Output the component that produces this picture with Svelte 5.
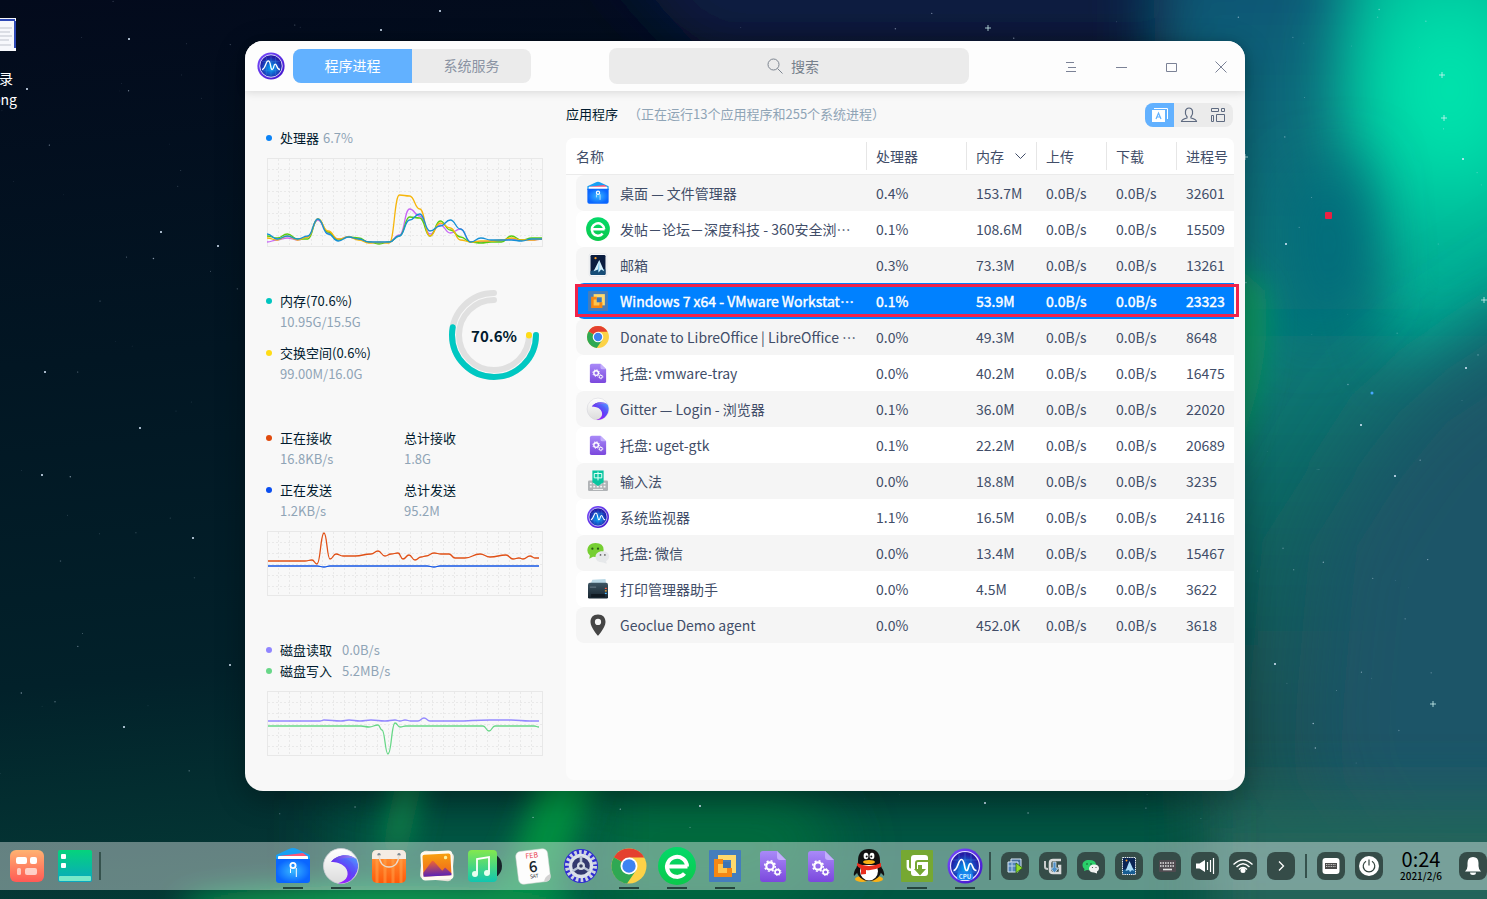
<script lang="ts">
	type Point = [number, number];

	interface Series {
		color: string;
		points: Point[];
	}

	interface Process {
		icon: string;
		name: string;
		cut?: boolean;
		cpu: string;
		memory: string;
		pid: number;
	}

	const processes: Process[] = [
		{ icon: 'files', name: '桌面 — 文件管理器', cpu: '0.4%', memory: '153.7M', pid: 32601 },
		{ icon: 'e360', name: '发帖－论坛－深度科技 - 360安全浏', cut: true, cpu: '0.1%', memory: '108.6M', pid: 15509 },
		{ icon: 'mail', name: '邮箱', cpu: '0.3%', memory: '73.3M', pid: 13261 },
		{ icon: 'vmware', name: 'Windows 7 x64 - VMware Workstat', cut: true, cpu: '0.1%', memory: '53.9M', pid: 23323 },
		{ icon: 'chrome', name: 'Donate to LibreOffice | LibreOffice ', cut: true, cpu: '0.0%', memory: '49.3M', pid: 8648 },
		{ icon: 'gears', name: '托盘: vmware-tray', cpu: '0.0%', memory: '40.2M', pid: 16475 },
		{ icon: 'browser', name: 'Gitter — Login - 浏览器', cpu: '0.1%', memory: '36.0M', pid: 22020 },
		{ icon: 'gears', name: '托盘: uget-gtk', cpu: '0.1%', memory: '22.2M', pid: 20689 },
		{ icon: 'input', name: '输入法', cpu: '0.0%', memory: '18.8M', pid: 3235 },
		{ icon: 'monitor', name: '系统监视器', cpu: '1.1%', memory: '16.5M', pid: 24116 },
		{ icon: 'wechat', name: '托盘: 微信', cpu: '0.0%', memory: '13.4M', pid: 15467 },
		{ icon: 'printer', name: '打印管理器助手', cpu: '0.0%', memory: '4.5M', pid: 3622 },
		{ icon: 'pin', name: 'Geoclue Demo agent', cpu: '0.0%', memory: '452.0K', pid: 3618 }
	];

	let selected = $state(23323);
	let query = $state('');

	const dockApps = [
		{ icon: 'files', label: '文件管理器', open: true },
		{ icon: 'browser', label: '浏览器', open: true },
		{ icon: 'store', label: '应用商店', open: false },
		{ icon: 'album', label: '相册', open: false },
		{ icon: 'music', label: '音乐', open: false },
		{ icon: 'calendar', label: '日历', open: false },
		{ icon: 'settings', label: '控制中心', open: false },
		{ icon: 'chrome', label: 'Chrome', open: true },
		{ icon: 'e360', label: '360安全浏览器', open: true },
		{ icon: 'vmware', label: 'VMware', open: true },
		{ icon: 'gears', label: 'vmware-tray', open: false },
		{ icon: 'gears', label: 'uget-gtk', open: false },
		{ icon: 'qq', label: 'QQ', open: false },
		{ icon: 'uget', label: 'uGet', open: true },
		{ icon: 'cpu', label: '系统监视器', open: true }
	];

	const tray = ['t-vm', 't-uget', 't-wechat', 't-mail', 't-keys', 't-volume', 't-wifi', 't-more'];

	const evenly = (ys: number[]): Point[] => ys.map((y, i) => [(i * 275) / (ys.length - 1), y]);

	const cpuSeries: Series[] = [
		{ color: '#c869f5', points: evenly([84, 82, 80, 82, 79, 62, 75, 81, 79, 81, 84, 85, 84, 77, 51, 58, 76, 67, 75, 71, 84, 84, 83, 83, 81, 82, 82, 81]) },
		{ color: '#58cc12', points: evenly([78, 80, 76, 81, 81, 61, 74, 82, 79, 80, 84, 86, 84, 78, 59, 60, 78, 63, 72, 79, 84, 85, 84, 84, 78, 82, 80, 80]) },
		{ color: '#f6b60c', points: evenly([80, 82, 78, 82, 79, 61, 73, 81, 79, 82, 85, 84, 85, 37, 38, 51, 78, 65, 70, 82, 84, 83, 83, 82, 80, 82, 82, 81]) },
		{ color: '#1590d6', points: evenly([76, 81, 78, 81, 78, 61, 76, 83, 79, 81, 84, 84, 84, 78, 62, 56, 73, 68, 62, 71, 84, 80, 82, 82, 82, 83, 81, 81]) }
	];

	const netSeries: Series[] = [
		{
			color: '#e05016',
			points: [
				[1, 30], [38, 30], [45, 29], [50, 33], [57, 2], [63, 28], [69, 23], [76, 25], [88, 25], [104, 23], [111, 20],
				[118, 25], [124, 23], [131, 22], [136, 28], [142, 24], [148, 29], [154, 26], [159, 25], [167, 22], [174, 23],
				[182, 23], [188, 27], [198, 27], [213, 23], [223, 26], [239, 24], [246, 28], [252, 27], [256, 28], [263, 25],
				[268, 27], [272, 27]
			]
		},
		{ color: '#1456e4', points: [[1, 35], [50, 35], [57, 36], [63, 35], [160, 35], [167, 36], [173, 35], [272, 35]] }
	];

	const diskSeries: Series[] = [
		{
			color: '#9388ff',
			points: [
				[1, 30], [53, 30], [57, 29], [74, 30], [82, 29], [93, 30], [104, 29], [118, 30], [128, 29], [133, 30], [138, 29],
				[144, 30], [151, 30], [157, 27], [163, 30], [188, 30], [223, 29], [244, 29], [263, 30], [272, 30]
			]
		},
		{
			color: '#68d788',
			points: [
				[1, 35], [51, 35], [57, 35], [94, 35], [102, 36], [111, 34], [115, 39], [121, 63], [128, 32], [133, 36],
				[139, 35], [211, 35], [216, 35], [222, 40], [228, 35], [233, 35], [267, 35], [272, 36]
			]
		}
	];

	function curve(points: Point[]) {
		let d = `M${points[0]}`;
		for (let i = 1; i < points.length; i++) {
			const [x0, y0] = points[i - 1];
			const [x1, y1] = points[i];
			const mid = (x0 + x1) / 2;
			d += `C${mid} ${y0} ${mid} ${y1} ${x1} ${y1}`;
		}
		return d;
	}

	const steps = (size: number) => Array.from({ length: Math.ceil(size / 11) - 1 }, (_, i) => (i + 1) * 11);

	// faint stars come from a small fixed-seed generator so the sky never changes
	let seed = 7;
	const random = () => (seed = (seed * 16807) % 2147483647) / 2147483647;
	const dust = Array.from({ length: 240 }, () => ({
		x: random() * 1487,
		y: random() * 840,
		r: 0.3 + random() * 0.5,
		o: 0.15 + random() * 0.5
	}));
	const stars: Point[] = [
		[381, 30], [440, 11], [129, 39], [161, 232], [218, 246], [45, 372], [42, 475], [140, 428], [124, 727], [700, 806],
		[1286, 244], [1361, 425], [1395, 476], [1275, 664], [230, 665], [193, 538], [27, 89], [1463, 159], [985, 803], [1466, 368]
	];
	const sparkles: Point[] = [[988, 28], [1442, 75], [1433, 704], [1245, 157], [1484, 300], [1444, 118]];
</script>

{#snippet icon(name: string)}
	<svg class="icon" viewBox="0 0 48 48" aria-hidden="true"><use href="#{name}" /></svg>
{/snippet}

{#snippet chart(height: number, series: Series[])}
	<svg class="chart" viewBox="0 0 276 {height}" preserveAspectRatio="none" aria-hidden="true">
		<g class="grid">
			{#each steps(276) as x}
				<line x1={x + 0.5} x2={x + 0.5} y1="1" y2={height} />
			{/each}
			{#each steps(height) as y}
				<line x1="1" x2="276" y1={y + 0.5} y2={y + 0.5} />
			{/each}
		</g>
		<rect class="frame" x="0.5" y="0.5" width="275" height={height - 1} />
		{#each series as line}
			<path d={curve(line.points)} fill="none" stroke={line.color} stroke-width="1.3" />
		{/each}
	</svg>
{/snippet}

{#snippet stat(color: string, label: string, value: string)}
	<div class="stat">
		<i class="dot" style="background: {color}"></i>
		<div class="label">{label}</div>
		<div class="value">{value}</div>
	</div>
{/snippet}

<svg class="defs" aria-hidden="true">
	<defs>
		<linearGradient id="g-orange" x2="0" y2="1"><stop stop-color="#ffb271" /><stop offset="1" stop-color="#ff5a55" /></linearGradient>
		<linearGradient id="g-teal" x2="0" y2="1"><stop stop-color="#05d37c" /><stop offset="1" stop-color="#0aa7c0" /></linearGradient>
		<linearGradient id="g-violet" x2="0" y2="1"><stop stop-color="#a98af8" /><stop offset="1" stop-color="#7b48dd" /></linearGradient>
		<linearGradient id="g-bag" x2="0" y2="1"><stop stop-color="#ff9a3c" /><stop offset="1" stop-color="#ff5a0a" /></linearGradient>
		<linearGradient id="g-photo" x2="0" y2="1"><stop stop-color="#f7a010" /><stop offset="1" stop-color="#f0641c" /></linearGradient>
		<linearGradient id="g-hill" x2="0" y2="1"><stop stop-color="#f0642f" /><stop offset="1" stop-color="#5b23b4" /></linearGradient>
		<linearGradient id="g-music" x2="0" y2="1"><stop stop-color="#83e84e" /><stop offset="1" stop-color="#10c6b0" /></linearGradient>
		<linearGradient id="g-wave" x1="0.2" y1="1" x2="0.9" y2="0"><stop stop-color="#a81cff" /><stop offset="0.5" stop-color="#6a35f8" /><stop offset="1" stop-color="#48a4ff" /></linearGradient>
		<linearGradient id="g-crest" x2="1" y2="0"><stop stop-color="#5a35e0" /><stop offset="1" stop-color="#a58cf6" /></linearGradient>
		<linearGradient id="g-e" x2="0" y2="1"><stop stop-color="#04d96a" /><stop offset="1" stop-color="#0bc94b" /></linearGradient>
		<linearGradient id="g-pearl" x2="0" y2="1"><stop stop-color="#fff" /><stop offset="1" stop-color="#dcdcdc" /></linearGradient>
		<linearGradient id="g-ring" x2="1" y2="1"><stop stop-color="#7a4cff" /><stop offset="1" stop-color="#3d11c8" /></linearGradient>
		<linearGradient id="g-print" x2="0" y2="1"><stop stop-color="#3d5563" /><stop offset="1" stop-color="#17242e" /></linearGradient>
		<radialGradient id="g-folder"><stop stop-color="#38b8ff" /><stop offset="1" stop-color="#0a66ff" /></radialGradient>
		<radialGradient id="g-scope" cy="0.6"><stop stop-color="#00a6f5" /><stop offset="1" stop-color="#241aa4" /></radialGradient>

		<symbol id="launcher" viewBox="0 0 48 48">
			<rect x="7" y="8" width="34" height="32" rx="6" fill="url(#g-orange)" />
			<g fill="#fff">
				<rect x="13" y="15" width="11" height="7" rx="2" /><rect x="27" y="15" width="7" height="7" rx="2" />
				<rect x="14" y="26" width="4" height="7" rx="1.5" opacity="0.6" /><rect x="22" y="26" width="12" height="7" rx="2" opacity="0.65" />
			</g>
		</symbol>
		<symbol id="panel" viewBox="0 0 48 48">
			<rect x="7" y="8" width="34" height="32" rx="2" fill="url(#g-teal)" />
			<rect x="8" y="34" width="32" height="5" rx="1" fill="#78e8c9" />
			<rect x="10" y="12" width="5" height="5" rx="1" fill="#fff" /><rect x="10" y="21" width="5" height="5" rx="1" fill="#fff" />
		</symbol>
		<symbol id="files" viewBox="0 0 48 48">
			<path d="M7 13 20 7q4-2 8 0l13 6v6H7z" fill="#18a0f5" />
			<path d="M10 14 34 11l4 3v5H10z" fill="#ff5577" />
			<path d="M9 15q0-1 1-1h28q1 0 1 1v4H9z" fill="#fff" />
			<path d="M7 17h34v21q0 3-3 3H10q-3 0-3-3z" fill="url(#g-folder)" />
			<circle cx="24" cy="23.5" r="2.6" fill="none" stroke="#fff" stroke-width="1.8" />
			<path d="M21.5 26.500v4.500M27.300 26v9" stroke="#fff" stroke-width="1" />
		</symbol>
		<symbol id="browser" viewBox="0 0 48 48">
			<circle cx="24" cy="24" r="17.5" fill="url(#g-pearl)" stroke="#d0d0d8" stroke-width="0.8" />
			<path d="M14 20C20 12 32 11 39.500 17A17.500 17.500 0 0 1 21 41.200C31 39 33 31 28 25 24 21 19 20 14 20z" fill="url(#g-wave)" />
			<path d="M18 20C29 19 36 26 33 38.500 42 32 38 19 28 17z" fill="#4a5cf8" opacity="0.4" />
			<path d="M14 20C20 12 32 11 39.500 17 32 14.500 22 16 14 20z" fill="url(#g-crest)" />
		</symbol>
		<symbol id="store" viewBox="0 0 48 48">
			<rect x="7" y="8" width="34" height="33" rx="5" fill="url(#g-bag)" />
			<path d="M12 17v24M20 17v24M28 17v24M36 17v24" stroke="#ffb45c" stroke-width="3" opacity="0.4" />
			<path d="M7 17v-4q0-5 5-5h24q5 0 5 5v4z" fill="#f5ece4" />
			<circle cx="14" cy="12.5" r="1.6" fill="#7b8790" /><circle cx="34" cy="12.5" r="1.6" fill="#7b8790" />
			<path d="M14 13q1 12 10 12t10-12" fill="none" stroke="#e9dccd" stroke-width="1.4" />
		</symbol>
		<symbol id="album" viewBox="0 0 48 48">
			<rect x="8" y="10" width="32" height="28" rx="4" fill="#e4dfd6" transform="rotate(6 24 24)" />
			<rect x="8" y="9" width="32" height="29" rx="4" fill="#fffaf0" transform="rotate(-3 24 24)" />
			<g transform="rotate(-3 24 24)">
				<rect x="10" y="12" width="28" height="22" rx="2" fill="url(#g-photo)" />
				<path d="M10 30 19 19q1-1 2 0l8 10 3-3 6 6v2H10z" fill="url(#g-hill)" />
				<circle cx="33" cy="16" r="1.7" fill="#fff09a" />
			</g>
		</symbol>
		<symbol id="music" viewBox="0 0 48 48">
			<circle cx="28" cy="24" r="13" fill="#172328" />
			<rect x="7" y="8" width="29" height="32" rx="4" fill="url(#g-music)" />
			<path d="M16 32V17l12-2v15" fill="none" stroke="#fff" stroke-width="1.8" />
			<circle cx="14" cy="32" r="3" fill="#e7fff0" /><circle cx="26" cy="31" r="3" fill="#e7fff0" />
		</symbol>
		<symbol id="calendar" viewBox="0 0 48 48">
			<g transform="rotate(-7 24 24)">
				<rect x="8" y="8" width="32" height="33" rx="5" fill="#fdfdfd" stroke="#d4d7d5" stroke-width="0.5" />
				<path d="M40 34v2q0 5-5 5h-2q1-5 7-7z" fill="#d2d2d2" />
				<text class="glyph" x="24" y="16" font-size="7" fill="#ea4452">FEB</text>
				<text class="glyph medium" x="24" y="30" font-size="15" fill="#17232c">6</text>
				<text class="glyph" x="24" y="36" font-size="5" fill="#17232c">SAT</text>
			</g>
		</symbol>
		<symbol id="settings" viewBox="0 0 48 48">
			<circle cx="24" cy="24" r="17" fill="#302dd2" />
			<circle cx="24" cy="24" r="14" fill="none" stroke="#cdd3df" stroke-width="4" stroke-dasharray="2.7 2.187" />
			<circle cx="24" cy="24" r="10.5" fill="#33386e" stroke="#dce1ea" stroke-width="3.4" />
			<path d="M24 24V14M24 24l-8.500 5M24 24l8.500 5" stroke="#b8c2d4" stroke-width="2.6" />
			<circle cx="24" cy="24" r="4" fill="#d4dae5" /><circle cx="24" cy="24" r="1.8" fill="#343b62" />
		</symbol>
		<symbol id="chrome" viewBox="0 0 48 48">
			<circle cx="24" cy="24" r="17.5" fill="#fcd247" />
			<path d="M24 24 8.800 15.200A17.500 17.500 0 0 1 39.200 15.500H24z" fill="#e4402f" />
			<path d="M24 24 8.800 15.200A17.500 17.500 0 0 0 22 41.400l9-13z" fill="#2fa853" />
			<circle cx="24" cy="24" r="8.5" fill="#fff" /><circle cx="24" cy="24" r="6.7" fill="#3d83f2" />
		</symbol>
		<symbol id="e360" viewBox="0 0 48 48">
			<circle cx="24" cy="24" r="19" fill="url(#g-e)" />
			<path d="M14 24.500H34.500M34 24.500a10 10 0 1 0-2.500 7" fill="none" stroke="#fff" stroke-width="4" />
		</symbol>
		<symbol id="vmware" viewBox="0 0 48 48">
			<rect x="8" y="8" width="32" height="32" rx="1" fill="#447dbc" />
			<g fill="none" stroke-width="5">
				<rect x="19.5" y="15.5" width="13" height="13" stroke="#ffd96c" />
				<path d="M22 19.500h-6.500v13h13V26" stroke="#f58712" />
				<path d="M19.500 22v6.500H26" stroke="#ffc44c" />
			</g>
			<rect x="22" y="20" width="7" height="6" fill="#3c74b4" />
		</symbol>
		<symbol id="gears" viewBox="0 0 48 48">
			<path d="M14 9h14l9 9v19q0 3-3 3H14q-3 0-3-3V12q0-3 3-3z" fill="url(#g-violet)" />
			<path d="M28 9v6q0 3 3 3h6z" fill="#c3aefc" />
			<g fill="none" stroke="#fff">
				<circle cx="21" cy="24" r="3.7" stroke-width="2.2" /><circle cx="21" cy="24" r="5.3" stroke-width="1.5" stroke-dasharray="2 2.16" />
				<circle cx="28.5" cy="30" r="2.4" stroke-width="1.6" /><circle cx="28.5" cy="30" r="3.5" stroke-width="1" stroke-dasharray="1.3 1.45" />
			</g>
		</symbol>
		<symbol id="qq" viewBox="0 0 48 48">
			<ellipse cx="17" cy="37" rx="7" ry="3" fill="#fbb116" /><ellipse cx="31" cy="37" rx="7" ry="3" fill="#fbb116" />
			<path d="M13 24q-5 5-4 10l4-4M35 24q5 5 4 10l-4-4" fill="#111" />
			<ellipse cx="24" cy="27" rx="12.5" ry="12" fill="#111" />
			<ellipse cx="24" cy="29" rx="9" ry="9.5" fill="#fff" />
			<path d="M13 19q0-12 11-12t11 12v4H13z" fill="#111" />
			<ellipse cx="21" cy="14" rx="2.4" ry="3.3" fill="#fff" /><ellipse cx="27" cy="14" rx="2.4" ry="3.3" fill="#fff" />
			<circle cx="21.7" cy="14.5" r="1" fill="#111" /><circle cx="26.3" cy="14.5" r="1" fill="#111" />
			<ellipse cx="24" cy="20" rx="6" ry="2" fill="#fbb116" />
			<path d="M12 21q12 6 24 0v4q-8 4-15 3v4l-5 .500v-6q-3-1-4-3z" fill="#e92e1e" />
		</symbol>
		<symbol id="uget" viewBox="0 0 48 48">
			<rect x="8" y="8" width="32" height="32" rx="1" fill="#76a832" />
			<path d="M14.800 18v7q0 3 4 3" fill="none" stroke="#fff" stroke-width="2.4" />
			<rect x="18" y="13" width="17" height="21" rx="3" fill="#fff" />
			<path d="M35.500 19H25q-2 0-2 2v6" fill="none" stroke="#76a832" stroke-width="2" />
			<path d="M25 23h4v4h4l-6 6.500-6-6.500h4z" fill="#76a832" />
		</symbol>
		<symbol id="monitor" viewBox="0 0 48 48">
			<circle cx="24" cy="24" r="17.5" fill="url(#g-ring)" />
			<circle cx="24" cy="24" r="14.5" fill="url(#g-scope)" stroke="#e4e0ff" stroke-width="1.2" />
			<path d="M12 18h24M12 30h24M18 12v24M24 10v28M30 12v24" stroke="#4da4ef" stroke-width="0.6" opacity="0.6" />
			<path d="M12.500 28.500C17 28.500 17 17.500 20.500 17.500S23 28.500 25.500 28.500 27 21.500 29.500 21.500 31 28.500 35.500 28.500" fill="none" stroke="#fff" stroke-width="1.7" />
		</symbol>
		<symbol id="cpu" viewBox="0 0 48 48">
			<use href="#monitor" />
			<rect x="16" y="30.5" width="16" height="7.5" rx="3" fill="#1784ef" />
			<text class="glyph bold" x="24" y="36.5" font-size="6" fill="#d8f4ff">CPU</text>
		</symbol>
		<symbol id="mail" viewBox="0 0 48 48">
			<rect x="10" y="6" width="28" height="36" rx="3" fill="#fff" stroke="#d7dbe0" />
			<rect x="12" y="8" width="24" height="32" rx="2" fill="#0a1c3f" />
			<path d="M12 34q12-7 24-3v7q0 2-2 2H14q-2 0-2-2z" fill="#164d77" />
			<path d="M26 16 17 34l7-3 1 5 4-5 5 3z" fill="#d3effc" /><path d="M26 16 24 31l1 5 1-6z" fill="#6ebfe8" />
			<circle cx="20" cy="13" r="1.8" fill="#ffa025" />
		</symbol>
		<symbol id="input" viewBox="0 0 48 48">
			<rect x="8" y="23" width="32" height="17" rx="2" fill="#b0b3b6" />
			<path d="M11 28h26M11 33h26" stroke="#f4f4f4" stroke-width="2.6" stroke-dasharray="3 2.5" /><path d="M16 37.500h16" stroke="#f4f4f4" stroke-width="1.5" />
			<path d="M15 7h18v19L24 32l-9-6z" fill="#09c5a0" />
			<path d="M18 12h12v7H18zM24 9v14" fill="none" stroke="#e2fff6" stroke-width="1.6" />
		</symbol>
		<symbol id="wechat" viewBox="0 0 48 48">
			<path d="M20 8C12 8 7 13 7 20q0 5 4 8l-1 5 6-3q17 2 17-11 0-11-13-11z" fill="#76cf32" />
			<circle cx="15" cy="17" r="1.8" fill="#2a5a14" /><circle cx="24" cy="17" r="1.8" fill="#2a5a14" />
			<path d="M31 21c-7 0-11 4-11 9q0 9 12 9l6 2-1-4q5-3 5-7 0-9-11-9z" fill="#e6e8ea" />
			<circle cx="28" cy="27" r="1.4" fill="#666" /><circle cx="35" cy="27" r="1.4" fill="#666" />
		</symbol>
		<symbol id="printer" viewBox="0 0 48 48">
			<path d="M12 16 15 9l21-1 1 8z" fill="#b9d8e6" />
			<path d="M8 17q0-3 3-3h26q3 0 3 3v20q0 2-2 2H10q-2 0-2-2z" fill="url(#g-print)" />
			<path d="M13 32h22v5H13z" fill="#101a22" /><path d="M11 21h10" stroke="#8c9da8" />
			<path d="M35 23h3" stroke="#ff5f46" stroke-width="2" /><path d="M35 27h3" stroke="#ffb03a" stroke-width="2" /><path d="M35 31h3" stroke="#48b8ff" stroke-width="2" />
		</symbol>
		<symbol id="pin" viewBox="0 0 48 48">
			<path fill-rule="evenodd" d="M24 7C16 7 12 12 12 19c0 9 12 22 12 22s12-13 12-22c0-7-4-12-12-12zm0 7a5 5 0 1 1 0 10 5 5 0 0 1 0-10z" fill="#454545" />
		</symbol>

		<symbol id="t-vm" viewBox="0 0 28 28">
			<path d="M10 7h10v9H10z" fill="#47709f" stroke="#dceaf8" /><path d="M7 10h10v10H7z" fill="#5585ba" stroke="#dceaf8" />
			<path d="M7 14h8M11 11v9" stroke="#b9d2ea" /><path d="M15 11v10l6.500-5z" fill="#8fdc2a" stroke="#2e6a12" stroke-width="0.8" />
		</symbol>
		<symbol id="t-uget" viewBox="0 0 28 28">
			<path d="M6 9v6q0 2 3 2" fill="none" stroke="#c9cccc" stroke-width="2" />
			<path d="M22 8h-8q-3 0-3 3v7q0 3 3 3h7v-7h-2" fill="none" stroke="#d9dbdb" stroke-width="2.6" />
			<path d="M14 10h3v6h2.500L15.500 21l-4-5H14z" fill="#4d90c8" stroke="#e6eaec" stroke-width="0.7" />
		</symbol>
		<symbol id="t-wechat" viewBox="0 0 28 28">
			<path d="M12 8c-4 0-6.500 2-6.500 5 0 2 1 3 2 4l-.500 2 3-1q9 1 9-5 0-5-7-5z" fill="#2ad06a" />
			<circle cx="10" cy="12" r=".8" fill="#16532c" /><circle cx="14" cy="12" r=".8" fill="#16532c" />
			<path d="M17 12.500c-3 0-5 2-5 4q0 4 5 4l3 1v-2q2-1 2-3 0-4-5-4z" fill="#f1f3f1" />
			<circle cx="15.5" cy="15.5" r=".6" fill="#444" /><circle cx="19" cy="15.5" r=".6" fill="#444" />
		</symbol>
		<symbol id="t-mail" viewBox="0 0 28 28">
			<rect x="7.5" y="5.5" width="13" height="17" fill="#0a2454" stroke="#e8eef2" stroke-dasharray="1.5 .7" />
			<path d="M8 18q6-3 12-1v5H8z" fill="#175d92" /><path d="M14.500 9 10.500 19l3.500-1 1 2 2-2 2 1z" fill="#a9dcf8" /><circle cx="11.5" cy="8.5" r="1" fill="#ffa025" />
		</symbol>
		<symbol id="t-keys" viewBox="0 0 28 28">
			<rect x="6" y="8" width="17" height="12" rx="1" fill="#4f4b50" />
			<path d="M7 11h15M7 14h15" stroke="#e4e4e4" stroke-width="1.6" stroke-dasharray="1.5 1" /><path d="M10 17.500h9" stroke="#e4e4e4" stroke-width="1.6" />
		</symbol>
		<symbol id="t-volume" viewBox="0 0 28 28">
			<path d="M5 11.500h3.500L14 8v12l-5.500-3.500H5z" fill="#fff" /><path d="M16.500 10v8M19.500 8v12M22.500 6v16" stroke="#fff" stroke-width="1.2" />
		</symbol>
		<symbol id="t-wifi" viewBox="0 0 28 28">
			<path d="M4.500 12.500q9.500-9 19 0M7.500 15q6.500-6.500 13 0M10 17.500q4-4 8 0" fill="none" stroke="#fff" stroke-width="1.4" /><circle cx="14" cy="18.5" r="2.5" fill="#fff" />
		</symbol>
		<symbol id="t-more" viewBox="0 0 28 28"><path d="m12 9.500 4.500 4.500-4.500 4.500" fill="none" stroke="#fff" stroke-width="1.3" /></symbol>
		<symbol id="t-board" viewBox="0 0 28 28">
			<rect x="5.5" y="6" width="17" height="16" rx="3" fill="#fff" /><rect x="8" y="11" width="12" height="6" fill="#4b4b4b" />
			<path d="M9 12.500h10M9 14.500h10" stroke="#c9c9c9" stroke-dasharray="1 .7" />
		</symbol>
		<symbol id="t-power" viewBox="0 0 28 28">
			<circle cx="14" cy="14" r="10" fill="#fff" /><path d="M14 7.500v6M11 9.200a5.800 5.800 0 1 0 6 0" fill="none" stroke="#33443f" stroke-width="1.2" />
		</symbol>
		<symbol id="t-bell" viewBox="0 0 28 28">
			<path d="M6 19.500q2.500-2 2.500-5.500V11q0-6 5.500-6t5.500 6v3q0 3.500 2.500 5.500z" fill="#fff" /><path d="M11 20.500h6q0 2.500-3 2.500t-3-2.500z" fill="#fff" />
		</symbol>
	</defs>
</svg>

<div class="desktop">
	<svg class="sky" viewBox="0 0 1487 899" preserveAspectRatio="none" aria-hidden="true">
		<defs>
			<linearGradient id="night" x2="0.15" y2="1">
				<stop stop-color="#030a1c" />
				<stop offset="0.4" stop-color="#021623" />
				<stop offset="0.75" stop-color="#02212a" />
				<stop offset="1" stop-color="#043a36" />
			</linearGradient>
			<linearGradient id="east" x2="0" y2="1">
				<stop stop-color="#0b4a72" />
				<stop offset="0.18" stop-color="#086478" />
				<stop offset="0.4" stop-color="#067a78" />
				<stop offset="0.56" stop-color="#0e655f" />
				<stop offset="0.75" stop-color="#144f4d" />
				<stop offset="1" stop-color="#175f4c" />
			</linearGradient>
			<filter id="wide" x="-100%" y="-100%" width="300%" height="300%"><feGaussianBlur stdDeviation="50" /></filter>
			<filter id="soft" x="-100%" y="-100%" width="300%" height="300%"><feGaussianBlur stdDeviation="30" /></filter>
			<filter id="fine" x="-100%" y="-100%" width="300%" height="300%"><feGaussianBlur stdDeviation="14" /></filter>
		</defs>
		<rect width="1487" height="899" fill="url(#night)" />
		<path d="M600-60h560l60 110H700z" fill="#0a1c42" filter="url(#soft)" />
		<path d="M1150-100h600v1100h-560z" fill="url(#east)" filter="url(#soft)" />
		<path d="M1350-120h320v350l-150 80-120 60q-60-200-50-490z" fill="#04ae94" filter="url(#soft)" />
		<ellipse cx="1450" cy="90" rx="90" ry="120" fill="#05e6ae" filter="url(#wide)" />
		<path d="M1660 230 1400 400l-90 140-20 240 160 220h250z" fill="#1b5568" filter="url(#wide)" />
		<path d="M1290 180l70-20 10 130-70 60z" fill="#056c7c" filter="url(#soft)" />
		<path d="M1220 250l45 40q10 70-30 170h-25z" fill="#079560" filter="url(#fine)" />
		<path d="M1200 800h500v140h-500z" fill="#22655a" filter="url(#soft)" />
		<path d="M330 800h870v160H330z" fill="#065642" filter="url(#soft)" />
		<path d="M600 790h200l50 60-80 60H600z" fill="#066a3e" filter="url(#soft)" />
		<path d="M545 760h60l-30 80-20 60h-70l30-50z" fill="#058d41" filter="url(#fine)" />
		<path d="M400 760h28l-20 90h-28z" fill="#08804a" filter="url(#fine)" />
		<ellipse cx="380" cy="905" rx="200" ry="20" fill="#079a50" filter="url(#fine)" />
		<g fill="#dcecff">
			{#each dust as star}
				<circle cx={star.x} cy={star.y} r={star.r} opacity={star.o} />
			{/each}
			{#each stars as [cx, cy]}
				<circle {cx} {cy} r="1" />
			{/each}
		</g>
		<circle cx="1372" cy="393" r="1.5" fill="#49a7ff" />
		{#each sparkles as [x, y]}
			<path d="M{x - 3} {y}h6M{x} {y - 3}v6" stroke="#cff5f2" stroke-width="0.8" />
		{/each}
		<rect x="1325" y="212" width="7" height="7" rx="1" fill="#ea2142" />
	</svg>

	<div class="file">
		<svg viewBox="0 0 17 34" aria-hidden="true">
			<rect width="16" height="33" fill="#f7f8fc" /><path d="M0 2h15M15 3v27" stroke="#2d48b4" stroke-width="2" />
			<path d="M0 10h12M0 14h10M0 18h12M0 22h9M0 27h11" stroke="#bfc3cd" />
		</svg>
		<span>录</span>
		<span>png</span>
	</div>

	<main class="window">
		<header>
			<svg class="logo" viewBox="6 6 36 36" aria-hidden="true"><use href="#monitor" width="48" height="48" /></svg>
			<div class="tabs">
				<button class="active">程序进程</button>
				<button>系统服务</button>
			</div>
			<label class="search">
				<svg viewBox="0 0 16 16" aria-hidden="true"><circle cx="6.5" cy="6.5" r="5.5" /><path d="m10.500 10.500 5 5" /></svg>
				<input type="text" placeholder="搜索" aria-label="搜索" bind:value={query} />
			</label>
			<div class="controls">
				<button aria-label="菜单"><svg viewBox="0 0 14 14"><path d="M3 3.500h8M5 8.500h8M3 12.500h10" /></svg></button>
				<button aria-label="最小化"><svg viewBox="0 0 14 14"><path d="M3 8.500h11" /></svg></button>
				<button aria-label="最大化"><svg viewBox="0 0 14 14"><path d="M3.500 4.500h10v8h-10z" /></svg></button>
				<button aria-label="关闭"><svg viewBox="0 0 14 14"><path d="m2.500 2.500 11 11M13.500 2.500l-11 11" /></svg></button>
			</div>
		</header>

		<div class="body">
			<aside>
				<section>
					<div class="stat inline">
						<i class="dot" style="background: #0b83f6"></i>
						<div class="label">处理器</div>
						<div class="value near">6.7%</div>
					</div>
					{@render chart(89, cpuSeries)}
				</section>

				<section class="memory">
					<div class="stats">
						{@render stat('#00c5c0', '内存(70.6%)', '10.95G/15.5G')}
						{@render stat('#ffdc16', '交换空间(0.6%)', '99.00M/16.0G')}
					</div>
					<svg class="ring" viewBox="0 0 90 90" aria-hidden="true">
						<g fill="none" stroke-width="6" stroke-linecap="round">
							<path d="M87 45a42 42 0 1 1-42-42" stroke="#e0e0e0" />
							<path d="M80 45a35 35 0 1 1-35-35" stroke="#e0e0e0" />
							<path d="M87 45a42 42 0 1 1-42-42" pathLength="100" stroke-dasharray="70.6 200" stroke="#00c8c2" />
							<path d="M80 45v.500" stroke="#ffdc16" />
						</g>
						<text x="45" y="52" text-anchor="middle">70.6%</text>
					</svg>
				</section>

				<section>
					<div class="network">
						{@render stat('#e04a0d', '正在接收', '16.8KB/s')}
						<div>
							<div class="label">总计接收</div>
							<div class="value">1.8G</div>
						</div>
						{@render stat('#0a4ef0', '正在发送', '1.2KB/s')}
						<div>
							<div class="label">总计发送</div>
							<div class="value">95.2M</div>
						</div>
					</div>
					{@render chart(65, netSeries)}
				</section>

				<section>
					<div class="stat inline">
						<i class="dot" style="background: #9085ff"></i>
						<div class="label">磁盘读取</div>
						<div class="value">0.0B/s</div>
					</div>
					<div class="stat inline">
						<i class="dot" style="background: #68d788"></i>
						<div class="label">磁盘写入</div>
						<div class="value">5.2MB/s</div>
					</div>
					{@render chart(65, diskSeries)}
				</section>
			</aside>

			<div class="content">
				<div class="toolbar">
					<h1>应用程序</h1>
					<p>（正在运行13个应用程序和255个系统进程）</p>
					<div class="views">
						<button class="active" aria-label="应用程序">
							<svg viewBox="0 0 18 16"><path d="M3 1.500h13.500V12" fill="none" stroke="#fff" /><rect x="1" y="3" width="13" height="12" fill="#fff" /><path d="m5 12 2.500-6L10 12M6 10h3" fill="none" stroke="#62b1ff" stroke-width="1.2" /></svg>
						</button>
						<button aria-label="我的进程">
							<svg viewBox="0 0 18 16"><path d="M1.500 14.500q0-2 5.500-3.500.500-1-.500-2Q5 7 5.500 4T9 1t3.500 3-1 5q-1 1-.500 2 5.500 1.500 5.500 3.500z" fill="none" stroke="#5e6a80" stroke-width="1.2" /></svg>
						</button>
						<button aria-label="所有进程">
							<svg viewBox="0 0 18 16"><path d="M2.500 1.500h7v3h-7zM12.500 1.500h3v3h-3zM2.500 8.500h2v6h-2zM7.500 7.500h8v7h-8z" fill="none" stroke="#5e6a80" /></svg>
						</button>
					</div>
				</div>

				<div class="card">
					<table>
						<thead>
							<tr>
								<th>名称</th>
								<th class="cpu">处理器</th>
								<th class="rate">内存 <svg class="sort" viewBox="0 0 11 6" aria-hidden="true"><path d="m.5.500 5 5 5-5" /></svg></th>
								<th class="rate">上传</th>
								<th class="rate">下载</th>
								<th class="pid">进程号</th>
							</tr>
						</thead>
						<tbody>
							{#each processes as process (process.pid)}
								<tr class:selected={process.pid === selected} onclick={() => (selected = process.pid)}>
									<td>
										<div class="name">
											{@render icon(process.icon)}
											<span class="title">{process.name}</span>
											{#if process.cut}<span class="more" lang="zh-CN">…</span>{/if}
										</div>
										{#if process.pid === selected}<div class="mark"></div>{/if}
									</td>
									<td>{process.cpu}</td>
									<td>{process.memory}</td>
									<td>0.0B/s</td>
									<td>0.0B/s</td>
									<td>{process.pid}</td>
								</tr>
							{/each}
						</tbody>
					</table>
				</div>
			</div>
		</div>
	</main>

	<footer class="dock">
		<button class="app" aria-label="启动器">{@render icon('launcher')}</button>
		<button class="app" aria-label="显示桌面">{@render icon('panel')}</button>
		<i class="divider"></i>
		<div class="apps">
			{#each dockApps as app}
				<button class="app" class:open={app.open} aria-label={app.label}>{@render icon(app.icon)}</button>
			{/each}
		</div>
		<i class="divider"></i>
		<div class="tray">
			{#each tray as name}
				<button aria-label={name.slice(2)}><svg viewBox="0 0 28 28"><use href="#{name}" /></svg></button>
			{/each}
		</div>
		<i class="divider short"></i>
		<div class="tray">
			<button aria-label="虚拟键盘"><svg viewBox="0 0 28 28"><use href="#t-board" /></svg></button>
			<button aria-label="关机"><svg viewBox="0 0 28 28"><use href="#t-power" /></svg></button>
		</div>
		<div class="clock">
			<time>0:24</time>
			<small>2021/2/6</small>
		</div>
		<div class="tray last">
			<button aria-label="通知"><svg viewBox="0 0 28 28"><use href="#t-bell" /></svg></button>
		</div>
	</footer>
</div>

<style>
	:global(body) {
		margin: 0;
	}

	.desktop {
		position: relative;
		display: flex;
		flex-direction: column;
		min-height: 100vh;
		box-sizing: border-box;
		padding-bottom: 9px;
		overflow: hidden;
		font: 14px/21px 'Noto Sans CJK SC', 'Noto Sans', sans-serif;
		color: #414d68;
	}

	.defs {
		position: absolute;
		width: 0;
		height: 0;
	}

	.sky {
		position: absolute;
		inset: 0;
		width: 100%;
		height: 100%;
	}

	button {
		display: flex;
		align-items: center;
		justify-content: center;
		border: 0;
		padding: 0;
		background: none;
		font: inherit;
		color: inherit;
	}

	.glyph {
		text-anchor: middle;
		font-family: 'Noto Sans CJK SC', sans-serif;
	}

	.glyph.medium {
		font-weight: 500;
	}

	.glyph.bold {
		font-weight: 700;
	}

	.file {
		position: absolute;
		top: 18px;
		left: 0;
		display: flex;
		flex-direction: column;
		align-items: flex-end;
		width: 17px;
		color: #fff;
	}

	.file svg {
		width: 17px;
		height: 34px;
		margin-bottom: 16px;
	}

	.file span:first-of-type {
		margin-right: 4px;
	}

	.window {
		position: relative;
		flex: 1;
		display: flex;
		flex-direction: column;
		margin: 41px 242px 51px 245px;
		border-radius: 18px;
		background: #f8f8f8;
		box-shadow: 0 8px 30px rgba(0, 0, 0, 0.3);
	}

	header {
		position: relative;
		display: flex;
		align-items: center;
		height: 50px;
		padding-left: 12px;
		border-radius: 18px 18px 0 0;
		background: #fdfdfd;
		box-shadow: 0 1px 10px rgba(0, 0, 0, 0.14);
	}

	.logo {
		width: 28px;
		height: 28px;
	}

	.tabs {
		display: flex;
		margin-left: 8px;
		border-radius: 8px;
		overflow: hidden;
		background: #ebebeb;
	}

	.tabs button {
		width: 119px;
		height: 34px;
		padding-bottom: 2px;
		color: #8a93a3;
	}

	.tabs .active {
		background: #62b1ff;
		color: #fff;
	}

	.search {
		display: flex;
		align-items: center;
		justify-content: center;
		gap: 8px;
		width: 360px;
		height: 36px;
		box-sizing: border-box;
		margin-left: 78px;
		padding-left: 8px;
		border-radius: 8px;
		background: #ebebeb;
	}

	.search svg {
		width: 16px;
		height: 16px;
		fill: none;
		stroke: #7d8590;
	}

	.search input {
		width: 28px;
		border: 0;
		padding: 0;
		outline: 0;
		background: none;
		font: inherit;
	}

	.search input::placeholder {
		color: #76808c;
		opacity: 1;
	}

	.controls {
		display: flex;
		margin-left: auto;
	}

	.controls button {
		width: 50px;
		height: 50px;
	}

	.controls svg {
		width: 14px;
		height: 14px;
		fill: none;
		stroke: #7b8296;
	}

	.body {
		flex: 1;
		display: flex;
		gap: 23px;
		padding: 0 11px 11px 22px;
	}

	aside {
		flex: 0 0 276px;
		padding-top: 36px;
		font-size: 13px;
	}

	section + section {
		margin-top: 43px;
	}

	.stat {
		position: relative;
		padding-left: 13px;
	}

	.stat.inline {
		display: flex;
		gap: 10px;
	}

	.stat .near {
		margin-left: -6px;
	}

	.dot {
		position: absolute;
		top: 8px;
		left: -1px;
		width: 6px;
		height: 6px;
		border-radius: 50%;
	}

	.label {
		color: #001a2e;
	}

	.value {
		color: #8fa4b6;
	}

	.chart {
		display: block;
		width: 100%;
		margin-top: 10px;
	}

	.grid line {
		stroke: #e9e9e9;
		stroke-dasharray: 2 2;
	}

	.frame {
		fill: none;
		stroke: #e8e8e8;
	}

	.memory {
		display: flex;
		justify-content: space-between;
	}

	.stats,
	.network {
		display: grid;
		row-gap: 10px;
	}

	.network {
		grid-template-columns: 137px 1fr;
	}

	.ring {
		width: 90px;
		height: 90px;
		margin-right: 4px;
	}

	.ring text {
		font-size: 15px;
		font-weight: 700;
		fill: #001a2e;
	}

	.content {
		flex: 1;
		min-width: 0;
		display: flex;
		flex-direction: column;
		padding-top: 12px;
	}

	.toolbar {
		display: flex;
		align-items: flex-start;
		height: 24px;
		font-size: 13px;
		line-height: 22px;
	}

	h1 {
		margin: 0 10px 0 0;
		font-size: 13px;
		font-weight: 400;
		color: #001a2e;
	}

	.toolbar p {
		margin: 0;
		color: #8fa4b6;
	}

	.views {
		display: flex;
		margin: 0 1px 0 auto;
		border-radius: 8px;
		overflow: hidden;
		background: #ebebeb;
	}

	.views button {
		width: 29px;
		height: 24px;
	}

	.views button:last-child {
		width: 30px;
	}

	.views .active {
		background: #62b1ff;
	}

	.views svg {
		width: 18px;
		height: 16px;
	}

	.card {
		flex: 1;
		margin-top: 11px;
		border-radius: 8px;
		background: #fcfcfc;
	}

	table {
		width: 100%;
		table-layout: fixed;
		border-spacing: 0;
	}

	th {
		height: 36px;
		padding: 0 0 0 10px;
		border-bottom: 1px solid #ebebeb;
		background: #fff;
		font-weight: 400;
		text-align: left;
		white-space: nowrap;
	}

	th:first-child {
		border-radius: 8px 0 0 0;
	}

	th:last-child {
		border-radius: 0 8px 0 0;
	}

	th + th {
		background: linear-gradient(#e6e6e6, #e6e6e6) left center / 1px 28px no-repeat #fff;
	}

	.cpu {
		width: 90px;
	}

	.rate {
		width: 60px;
	}

	.pid {
		width: 48px;
	}

	.sort {
		width: 11px;
		height: 6px;
		margin: 0 0 3px 8px;
		fill: none;
		stroke: #414d68;
	}

	td {
		height: 36px;
		padding: 0 0 0 10px;
		background: #fff;
		background-clip: padding-box;
		white-space: nowrap;
	}

	tr:nth-child(odd) td {
		background-color: #f5f5f5;
	}

	td:first-child {
		border-left: 10px solid transparent;
		border-radius: 18px 0 0 18px / 8px 0 0 8px;
		padding-left: 7px;
	}

	tr.selected {
		position: relative;
	}

	tr.selected td {
		background-color: #0081ff;
		color: #fff;
		-webkit-text-stroke: 0.4px #fff;
	}

	.name {
		display: flex;
		align-items: center;
	}

	.name .icon {
		width: 30px;
		height: 30px;
		margin-right: 7px;
	}

	.title {
		white-space: pre;
	}

	.mark {
		position: absolute;
		top: 1px;
		right: -5px;
		left: 9px;
		height: 27px;
		border: 3px solid #f0234a;
	}

	.dock {
		position: relative;
		display: flex;
		align-items: center;
		height: 48px;
		padding-left: 3px;
		background: rgba(255, 255, 255, 0.39);
	}

	.app {
		position: relative;
		width: 48px;
		height: 48px;
	}

	.app .icon {
		width: 48px;
		height: 48px;
	}

	.open::after {
		content: '';
		position: absolute;
		bottom: 1px;
		left: 14px;
		width: 20px;
		height: 2px;
		background: #23443c;
	}

	.divider {
		width: 2px;
		height: 28px;
		background: #35524d;
	}

	.divider.short {
		height: 24px;
	}

	.apps {
		display: flex;
		margin-left: auto;
	}

	.tray {
		display: flex;
		gap: 10px;
		padding: 0 10px;
	}

	.tray.last {
		padding: 0;
	}

	.tray button {
		width: 28px;
		height: 28px;
		border-radius: 8px;
		background: #354c48;
	}

	.tray svg {
		width: 28px;
		height: 28px;
	}

	.clock {
		display: flex;
		flex-direction: column;
		align-items: center;
		width: 56px;
		margin-right: 10px;
		color: #000;
	}

	.clock time {
		font-size: 20px;
		line-height: 20px;
	}

	.clock small {
		font-size: 10px;
		font-weight: 500;
		line-height: 14px;
	}
</style>
